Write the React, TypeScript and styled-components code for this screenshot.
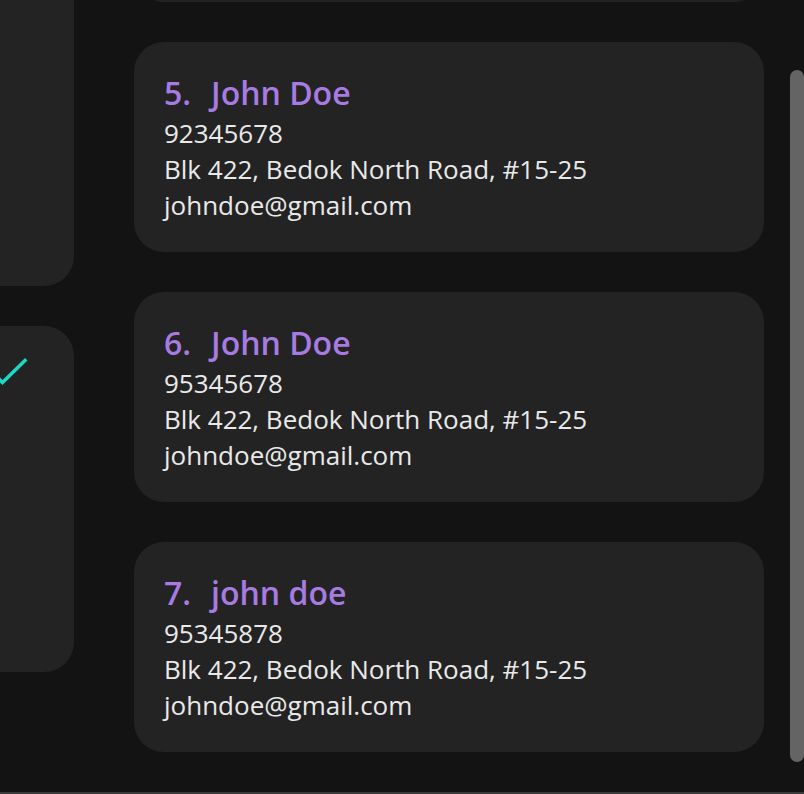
import React from "react";
import styled, { createGlobalStyle } from "styled-components";

const GlobalStyle = createGlobalStyle`
  html, body {
    margin: 0;
    padding: 0;
    background: #131313;
    overflow: hidden;
  }
  body {
    font-family: "Open Sans", "Noto Sans", sans-serif;
  }
`;

const Page = styled.div`
  display: flex;
  align-items: flex-start;
  width: 804px;
  height: 792px;
  overflow: hidden;
  background: #131313;
  border-bottom: 2px solid #3a3a3a;
`;

const SideColumn = styled.div`
  flex: 0 0 74px;
  width: 74px;
  height: 100%;
  overflow: hidden;
`;

const SideStack = styled.div`
  display: flex;
  flex-direction: column;
  gap: 40px;
  margin-top: -60px;
  margin-left: -226px;
  width: 300px;
`;

const SideCard = styled.div`
  box-sizing: border-box;
  height: 346px;
  border-radius: 30px;
  background: #232323;
  display: flex;
  justify-content: flex-end;
  align-items: flex-start;
  padding: 32px 46px 0 0;
`;

const ListColumn = styled.div`
  flex: 0 0 630px;
  margin-left: 60px;
  display: flex;
  flex-direction: column;
  gap: 40px;
  margin-top: -208px;
`;

const Card = styled.div`
  box-sizing: border-box;
  height: 210px;
  border-radius: 30px;
  background: #232323;
  padding: 28px 30px 29px 30px;
  display: flex;
  flex-direction: column;
`;

const Title = styled.div`
  display: flex;
  gap: 20px;
  font-size: 32px;
  line-height: 45px;
  font-weight: 600;
  color: #a77be1;
  white-space: nowrap;
`;

const Line = styled.div`
  font-size: 26px;
  line-height: 36px;
  color: #e9e9e9;
  white-space: nowrap;
`;

const Scrollbar = styled.div`
  flex: 0 0 14px;
  margin-left: 26px;
  margin-top: 70px;
  height: 692px;
  border-radius: 7px;
  background: #646464;
`;

const CheckIcon = () => (
  <svg width="40" height="28" viewBox="0 0 40 28" fill="none">
    <polyline
      points="5.5,15.5 14.5,24.5 37,2.5"
      stroke="#1ed8c5"
      strokeWidth="3.5"
      strokeLinecap="square"
      strokeLinejoin="miter"
    />
  </svg>
);

type Person = { index: number; name: string; phone: string; address: string; email: string };

const people: Person[] = [
  { index: 5, name: "John Doe", phone: "92345678", address: "Blk 422, Bedok North Road, #15-25", email: "johndoe@gmail.com" },
  { index: 6, name: "John Doe", phone: "95345678", address: "Blk 422, Bedok North Road, #15-25", email: "johndoe@gmail.com" },
  { index: 7, name: "john doe", phone: "95345878", address: "Blk 422, Bedok North Road, #15-25", email: "johndoe@gmail.com" },
];

export default function App() {
  return (
    <>
      <GlobalStyle />
      <Page>
        <SideColumn>
          <SideStack>
            <SideCard />
            <SideCard>
              <CheckIcon />
            </SideCard>
          </SideStack>
        </SideColumn>
        <ListColumn>
          <Card />
          {people.map((p) => (
            <Card key={p.index}>
              <Title>
                <span>{p.index}.</span>
                <span>{p.name}</span>
              </Title>
              <Line>{p.phone}</Line>
              <Line>{p.address}</Line>
              <Line>{p.email}</Line>
            </Card>
          ))}
        </ListColumn>
        <Scrollbar />
      </Page>
    </>
  );
}
